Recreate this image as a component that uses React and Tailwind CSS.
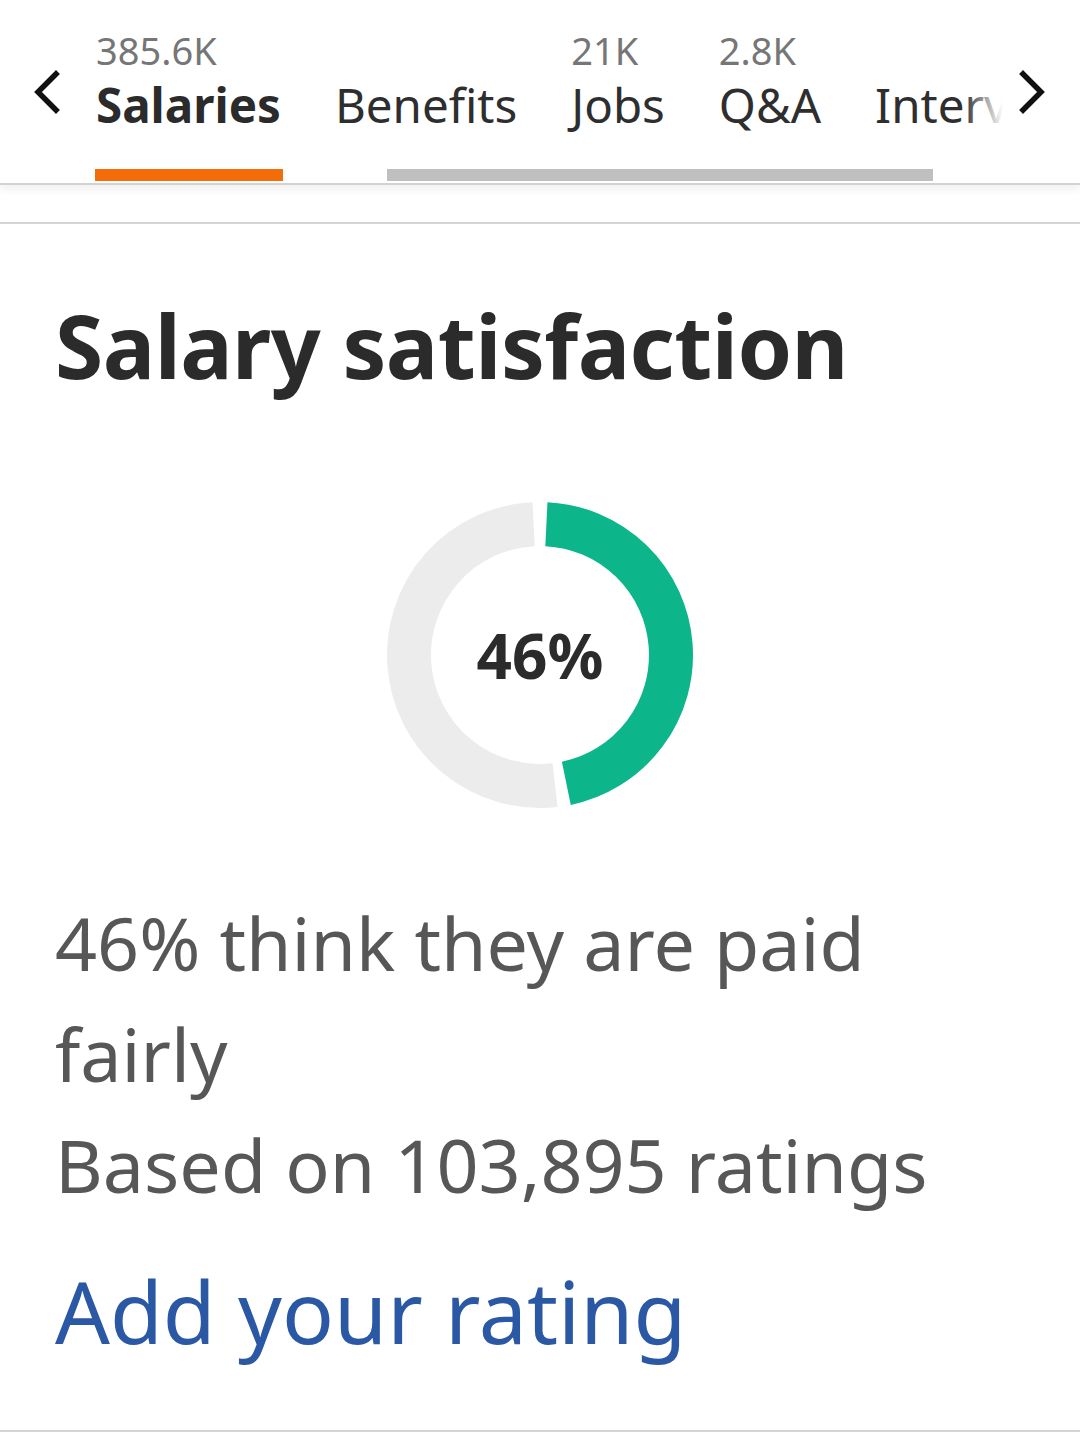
import React from 'react';

const tabs = [
  { count: '385.6K', label: 'Salaries', active: true },
  { count: '', label: 'Benefits' },
  { count: '21K', label: 'Jobs' },
  { count: '2.8K', label: 'Q&A' },
  { count: '', label: 'Interviews' },
  { count: '', label: 'Photos' },
];

const Chevron = ({ dir }) => (
  <svg width="30" height="44" viewBox="0 0 30 44" fill="none">
    <path
      d={dir === 'left' ? 'M24 4 L6 22 L24 40' : 'M6 4 L24 22 L6 40'}
      stroke="#111"
      strokeWidth="5.5"
      strokeLinecap="square"
      strokeLinejoin="miter"
    />
  </svg>
);

// arc between two angles (degrees, clockwise from 12 o'clock)
const arc = (cx, cy, r, a0, a1) => {
  const p = (a) => {
    const rad = ((a - 90) * Math.PI) / 180;
    return [cx + r * Math.cos(rad), cy + r * Math.sin(rad)];
  };
  const [x0, y0] = p(a0);
  const [x1, y1] = p(a1);
  const large = a1 - a0 > 180 ? 1 : 0;
  return `M ${x0} ${y0} A ${r} ${r} 0 ${large} 1 ${x1} ${y1}`;
};

const Donut = ({ value }) => {
  const start = 2.8;
  const end = start + (value / 100) * 360;
  return (
    <div className="relative w-[310px] h-[310px]">
      <svg width="310" height="310" viewBox="0 0 310 310">
        <path d={arc(155, 155, 131, end + 5, 360 - 2.8)} stroke="#ececec" strokeWidth="44" fill="none" />
        <path d={arc(155, 155, 131, start, end)} stroke="#0db68a" strokeWidth="44" fill="none" />
      </svg>
      <div className="absolute inset-0 flex items-center justify-center">
        <span className="text-[62px] font-bold text-[#2b2b2b] leading-none">{value}%</span>
      </div>
    </div>
  );
};

export default function App() {
  return (
    <div className="w-[1080px] min-h-[1453px] bg-white" style={{ fontFamily: '"Noto Sans", "Open Sans", sans-serif' }}>
      {/* Tab header */}
      <div className="relative h-[185px] border-b-2 border-[#d2d2d2] shadow-[0_5px_8px_rgba(0,0,0,0.06)] flex">
        <div className="w-[95px] flex items-start pt-[70px] pl-[32px]">
          <Chevron dir="left" />
        </div>
        <div className="relative w-[908px] overflow-hidden flex flex-col pt-[27px]">
          <div className="flex gap-[54px] whitespace-nowrap pl-[1px]">
            {tabs.map((t) => (
              <div key={t.label} className="flex flex-col">
                <span className="text-[38px] leading-[46px] h-[46px] text-[#767676]">{t.count}</span>
                <span
                  className={
                    'text-[47.5px] leading-[64px] ' +
                    (t.active ? 'font-bold text-[#2b2b2b]' : 'text-[#2e2e2e]')
                  }
                >
                  {t.label}
                </span>
              </div>
            ))}
          </div>
          <div className="flex mt-[32px]">
            <div className="w-[188px] h-[12px] bg-[#f46b0a]" />
            <div className="ml-[104px] w-[546px] h-[12px] bg-[#bfbfbf]" />
          </div>
          <div className="absolute right-0 top-0 h-[150px] w-[40px] bg-gradient-to-r from-transparent to-white" />
        </div>
        <div className="flex-1 flex items-start pt-[70px] pl-[14px]">
          <Chevron dir="right" />
        </div>
      </div>

      <div className="h-[37px]" />

      {/* Salary satisfaction card */}
      <div className="border-t-2 border-b-2 border-[#d4d4d4] px-[55px] pt-[68px] pb-[66px]">
        <h2 className="text-[87.5px] leading-[106px] font-bold text-[#2b2b2b] tracking-[-0.5px]">Salary satisfaction</h2>
        <div className="flex justify-center mt-[102px]">
          <Donut value={46} />
        </div>
        <div className="mt-[77px] text-[73.6px] leading-[111px] text-[#575757]">
          <p>46% think they are paid fairly</p>
          <p>Based on 103,895 ratings</p>
        </div>
        <a href="#" className="block mt-[38px] text-[86px] leading-[106px] text-[#2a58a5]">
          Add your rating
        </a>
      </div>
    </div>
  );
}
